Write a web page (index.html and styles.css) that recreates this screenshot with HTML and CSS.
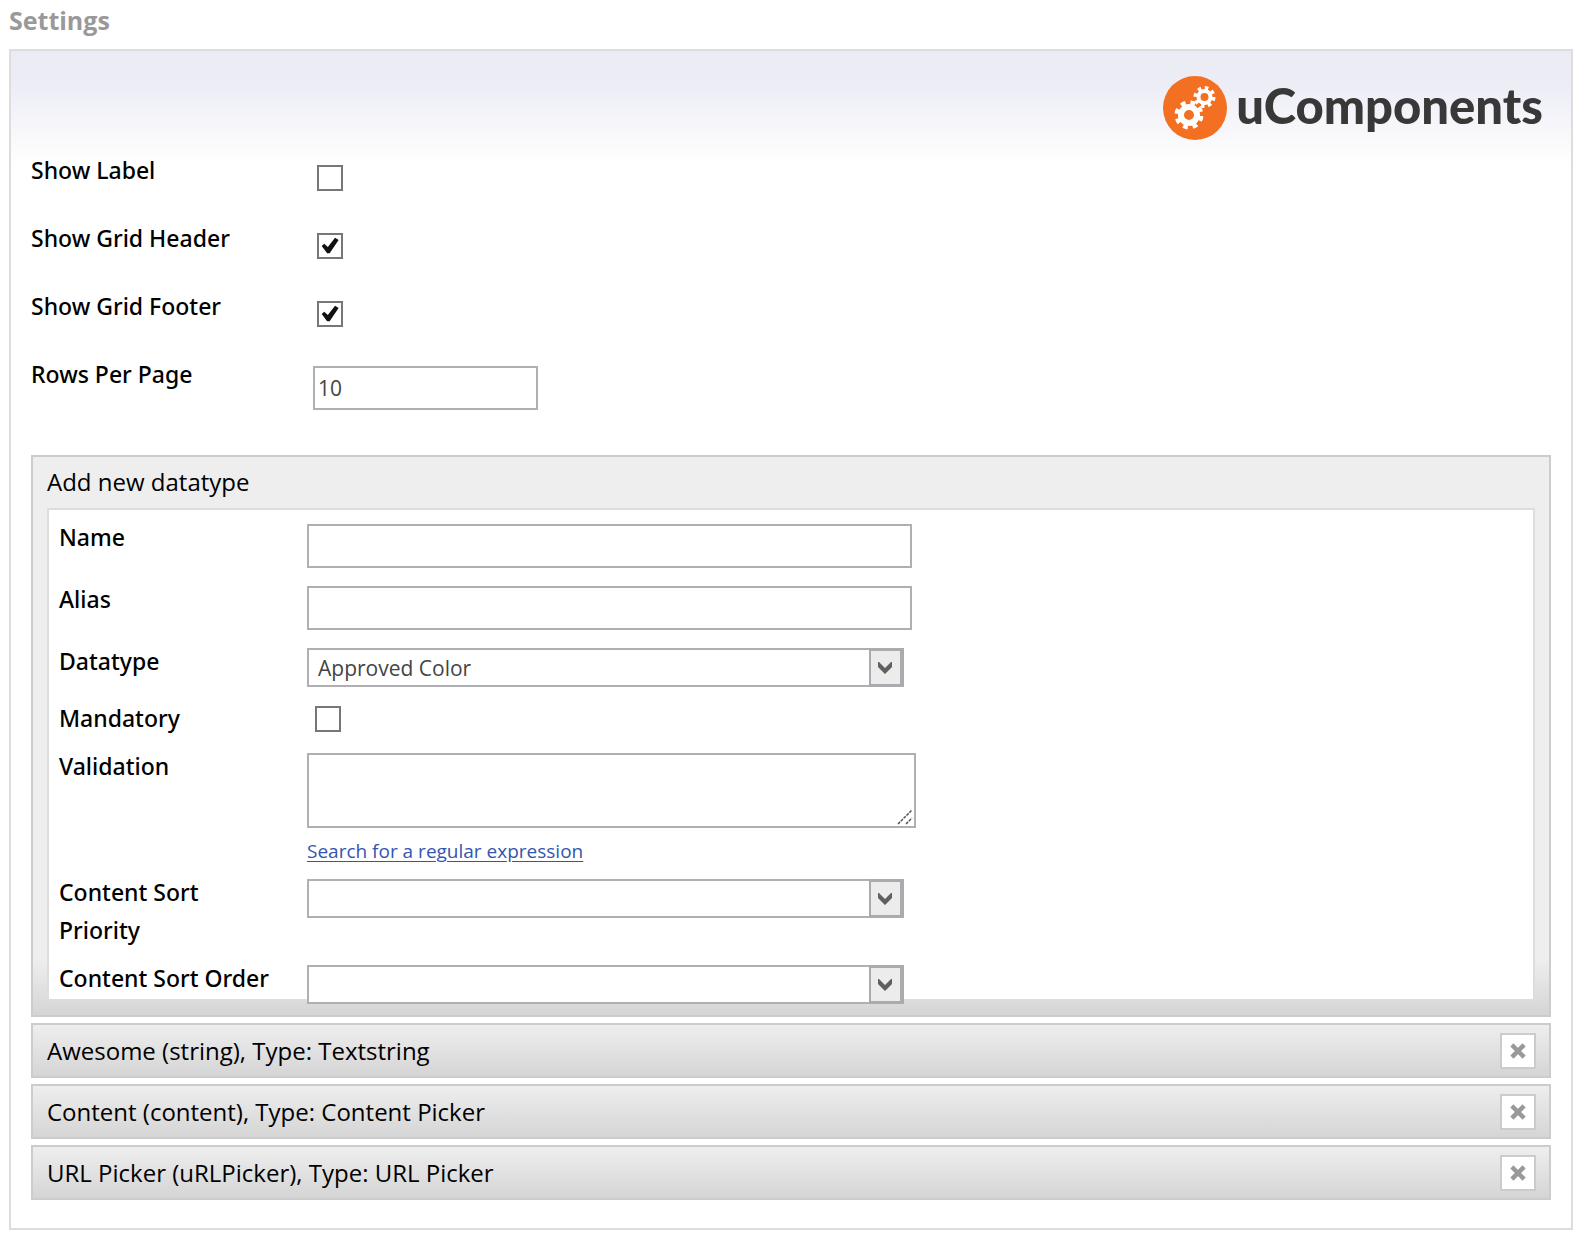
FILE: index.html
```
<!DOCTYPE html>
<html lang="en">
<head>
<meta charset="utf-8">
<meta name="viewport" content="width=device-width, initial-scale=1">
<title>Settings</title>
<link rel="stylesheet" href="styles.css">
</head>
<body>
<svg class="defs" aria-hidden="true">
  <symbol id="arrow" viewBox="0 0 35 39">
    <rect width="35" height="39" fill="#aaabaf"/>
    <rect x="2" y="3" width="29" height="33" fill="#ececed"/>
    <path d="M9 14 H10 L16 20 L22 14 H23 V19 L16 26 L9 19 Z" fill="#606062"/>
  </symbol>
  <symbol id="cross" viewBox="0 0 16 16">
    <path d="M3.500 3.500 L12.500 12.500 M12.500 3.500 L3.500 12.500" stroke="#999" stroke-width="4.500" stroke-linecap="square" fill="none"/>
  </symbol>
</svg>
<main class="page">
  <h1 class="title">Settings</h1>
  <form class="panel">
    <div class="brand">
      <svg class="brand-icon" viewBox="0 0 64 64" aria-hidden="true">
        <circle cx="32" cy="32" r="32" fill="#f36f21"/>
        <g fill="none" stroke="#fff">
          <circle cx="26" cy="39" r="8" stroke-width="6"/>
          <circle cx="26" cy="39" r="12" stroke-width="5" stroke-dasharray="4.7 4.72" transform="rotate(5 26 39)"/>
          <circle cx="41.500" cy="21" r="6" stroke-width="4"/>
          <circle cx="41.500" cy="21" r="9" stroke-width="4" stroke-dasharray="3.5 3.57"/>
        </g>
      </svg>
      <span class="brand-name">uComponents</span>
    </div>

    <div class="options">
      <div class="option">
        <label for="show-label">Show Label</label>
        <input class="check" type="checkbox" id="show-label">
      </div>
      <div class="option">
        <label for="show-header">Show Grid Header</label>
        <input class="check" type="checkbox" id="show-header" checked>
      </div>
      <div class="option">
        <label for="show-footer">Show Grid Footer</label>
        <input class="check" type="checkbox" id="show-footer" checked>
      </div>
      <div class="option">
        <label for="rows">Rows Per Page</label>
        <input class="text rows" type="text" id="rows" value="10">
      </div>
    </div>

    <section class="box add">
      <h2 class="box-title">Add new datatype</h2>
      <div class="fields">
        <div class="field">
          <label for="name">Name</label>
          <div class="control"><input class="text" type="text" id="name"></div>
        </div>
        <div class="field">
          <label for="alias">Alias</label>
          <div class="control"><input class="text" type="text" id="alias"></div>
        </div>
        <div class="field">
          <label for="datatype">Datatype</label>
          <div class="control"><span class="select"><select id="datatype"><option>Approved Color</option></select><svg class="arrow" aria-hidden="true"><use href="#arrow"/></svg></span></div>
        </div>
        <div class="field">
          <label for="mandatory">Mandatory</label>
          <div class="control"><input class="check" type="checkbox" id="mandatory"></div>
        </div>
        <div class="field">
          <label for="validation">Validation</label>
          <div class="control">
            <span class="area"><textarea id="validation"></textarea><svg class="grip" viewBox="0 0 16 16" aria-hidden="true"><path d="M1 15 L15 1 M9 15 L15 9" stroke="#555" stroke-width="1.500" stroke-dasharray="3 1"/></svg></span>
            <a class="search" href="#">Search for a regular expression</a>
          </div>
        </div>
        <div class="field">
          <label for="priority">Content Sort Priority</label>
          <div class="control"><span class="select"><select id="priority"><option></option></select><svg class="arrow" aria-hidden="true"><use href="#arrow"/></svg></span></div>
        </div>
        <div class="field last">
          <label for="order">Content Sort Order</label>
          <div class="control"><span class="select"><select id="order"><option></option></select><svg class="arrow" aria-hidden="true"><use href="#arrow"/></svg></span></div>
        </div>
      </div>
    </section>

    <div class="box item">
      <span>Awesome (string), Type: Textstring</span>
      <button class="remove" type="button" aria-label="Remove Awesome"><svg class="cross" aria-hidden="true"><use href="#cross"/></svg></button>
    </div>
    <div class="box item">
      <span>Content (content), Type: Content Picker</span>
      <button class="remove" type="button" aria-label="Remove Content"><svg class="cross" aria-hidden="true"><use href="#cross"/></svg></button>
    </div>
    <div class="box item">
      <span>URL Picker (uRLPicker), Type: URL Picker</span>
      <button class="remove" type="button" aria-label="Remove URL Picker"><svg class="cross" aria-hidden="true"><use href="#cross"/></svg></button>
    </div>
  </form>
</main>
</body>
</html>
```
FILE: styles.css
```
* { box-sizing: border-box; }

body {
  margin: 0;
  background: #fff;
  color: #000;
  font: 24px/38px "Open Sans", "Noto Sans", sans-serif;
}

label {
  font-family: "Noto Sans", sans-serif;
  font-size: 23px;
  font-weight: 500;
}

.defs { display: none; }

.page { padding: 1px 12px 10px 9px; }

.title {
  margin: 0 0 10px;
  color: #999;
  font-size: 25px;
  font-weight: 700;
  line-height: 38px;
}

.panel {
  padding: 25px 20px 22px;
  border: 2px solid #ddd;
  background: linear-gradient(#ebebf4, #ededf6 36px, #fff 112px) no-repeat #fff;
}

.brand {
  display: flex;
  align-items: flex-start;
  justify-content: flex-end;
  gap: 9px;
  padding-right: 8px;
}

.brand-icon { width: 64px; height: 64px; }

.brand-name {
  color: #383838;
  font-family: Lato, sans-serif;
  font-size: 49px;
  font-weight: 900;
  line-height: 58px;
}

.options { margin: 11px 0 32px; }

.option {
  display: grid;
  grid-template-columns: 282px 1fr;
  align-items: start;
  min-height: 68px;
}

.check {
  appearance: none;
  display: grid;
  width: 26px;
  height: 26px;
  margin: 14px 4px;
  border: 2px solid #777;
  background: #fff;
}

.check:checked::before {
  content: "";
  width: 18px;
  height: 18px;
  margin: 2px;
  background: #111;
  clip-path: polygon(4% 50%, 18% 38%, 38% 56%, 78% 4%, 98% 16%, 48% 90%, 34% 90%);
}

.text,
.select select,
.area textarea {
  display: block;
  width: 100%;
  margin: 0;
  border: 2px solid #b0b0b4;
  border-radius: 0;
  background: #fff;
  color: #444;
  font: 21px/32px "Open Sans", "Noto Sans", sans-serif;
}

.text { height: 44px; padding: 0 3px; }

.rows { width: 225px; margin-top: 11px; }

.box {
  margin-bottom: 6px;
  border: 2px solid #ccc;
  background: linear-gradient(#eee, #d5d5d5);
}

.add {
  padding: 6px 14px 14px;
  background: linear-gradient(to top, #d5d5d5, #eee 56px);
}

.box-title {
  margin: 0 0 7px;
  font-size: 24px;
  font-weight: 400;
  line-height: 38px;
}

.fields {
  padding: 8px 10px 2px;
  border: 2px solid #ddd;
  background: #fff;
}

.field {
  display: grid;
  grid-template-columns: 248px minmax(0, 605px);
  align-items: start;
  padding-bottom: 10px;
}

.field label { padding-right: 24px; }

.field:last-child { padding-bottom: 0; }

.control { padding-top: 6px; }

.control > .text {
  max-width: 605px;
  margin-bottom: 2px;
}

.control .check { margin: 1px 8px 0; }

.select {
  position: relative;
  display: block;
  max-width: 597px;
  margin-bottom: 2px;
}

.select select {
  appearance: none;
  height: 39px;
  padding: 0 40px 0 9px;
}

.arrow {
  position: absolute;
  top: 0;
  right: 0;
  width: 35px;
  height: 39px;
  pointer-events: none;
}

/* The last select hangs over the bottom edge of the field area. */
.last .select { margin-bottom: -7px; }

.area {
  position: relative;
  display: block;
  margin-right: -4px;
}

.area textarea { height: 75px; resize: none; }

.grip {
  position: absolute;
  right: 3px;
  bottom: 3px;
  width: 16px;
  height: 16px;
  pointer-events: none;
}

.search {
  display: block;
  width: fit-content;
  margin-top: 11px;
  color: #3355b0;
  font-size: 19px;
  line-height: 24px;
  text-underline-offset: 3px;
}

.item {
  display: flex;
  align-items: center;
  justify-content: space-between;
  min-height: 55px;
  padding: 0 13px 0 14px;
}

.remove {
  display: grid;
  place-items: center;
  width: 36px;
  height: 36px;
  padding: 0;
  border: 2px solid #ccc;
  background: #fff;
}

.cross { width: 16px; height: 16px; }
```
